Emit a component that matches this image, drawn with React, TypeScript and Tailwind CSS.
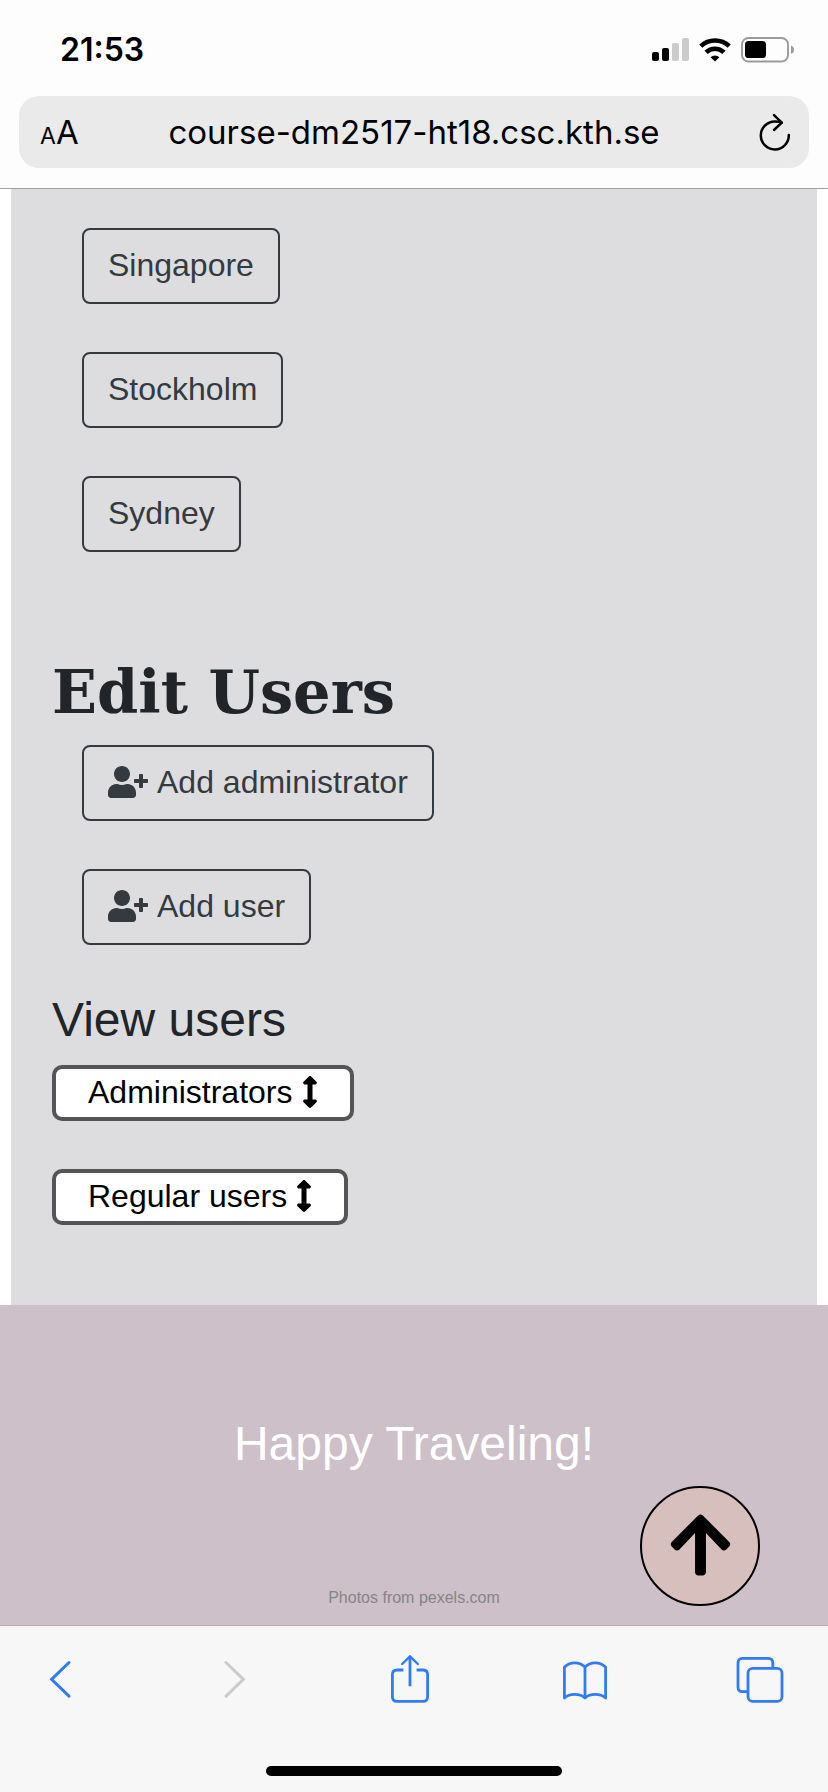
import type { ReactNode } from "react";
import { FaArrowsAltV, FaArrowUp, FaUserPlus } from "react-icons/fa";

const cities = ["Singapore", "Stockholm", "Sydney"];
const userActions = ["Add administrator", "Add user"];
const userLists = ["Administrators", "Regular users"];

function SignalIcon() {
  return (
    <svg width="37" height="24" viewBox="0 0 37 24" aria-hidden="true">
      <rect x="0" y="14" width="7" height="9" rx="2" fill="#000" />
      <rect x="10" y="10" width="7" height="13" rx="2" fill="#000" />
      <rect x="20" y="5" width="7" height="18" rx="2" fill="#cbcbcb" />
      <rect x="30" y="0" width="7" height="23" rx="2" fill="#cbcbcb" />
    </svg>
  );
}

function WifiIcon() {
  return (
    <svg width="32" height="24" viewBox="0 0 32 24" aria-hidden="true">
      <g fill="none" stroke="#000" strokeWidth="4.6">
        <path d="M1.8 8.2 A20.5 20.5 0 0 1 30.2 8.2" />
        <path d="M7.1 14.3 A12.8 12.8 0 0 1 24.9 14.3" />
      </g>
      <path d="M16 23.6 L11.6 19.2 A6.4 6.4 0 0 1 20.4 19.2 Z" fill="#000" />
    </svg>
  );
}

function BatteryIcon() {
  return (
    <svg width="54" height="26" viewBox="0 0 54 26" aria-hidden="true">
      <rect x="1" y="1" width="46" height="23.5" rx="6.5" fill="none" stroke="#9b9b9b" strokeWidth="1.9" />
      <rect x="4" y="4" width="21" height="17" rx="3.6" fill="#000" />
      <path d="M50 8.6 Q53 9.8 53 12.7 Q53 15.6 50 16.8 Z" fill="#9b9b9b" />
    </svg>
  );
}

function ReloadIcon() {
  return (
    <svg width="32" height="38" viewBox="0 0 32 38" fill="none" stroke="#000" strokeWidth="2.5" strokeLinecap="round" strokeLinejoin="round" aria-hidden="true">
      <path d="M29.8 22 A14 14 0 1 1 15.8 8.4 Q19.5 8.4 22.8 9.6" />
      <path d="M15 2.2 L22.8 9.6 L15 17" />
    </svg>
  );
}

function ChevronLeftIcon() {
  return (
    <svg width="24" height="48" viewBox="0 0 24 48" fill="none" stroke="#327bf6" strokeWidth="3" strokeLinecap="round" aria-hidden="true">
      <path d="M21 7.5 L3.6 24.3 L21 41.2" />
    </svg>
  );
}

function ChevronRightIcon() {
  return (
    <svg width="24" height="48" viewBox="0 0 24 48" fill="none" stroke="#cbcbcb" strokeWidth="3" strokeLinecap="round" aria-hidden="true">
      <path d="M3 7.5 L20.4 24.3 L3 41.2" />
    </svg>
  );
}

function ShareIcon() {
  return (
    <svg width="40" height="48" viewBox="0 0 40 48" fill="none" stroke="#327bf6" strokeWidth="2.8" strokeLinecap="round" strokeLinejoin="round" aria-hidden="true">
      <path d="M13.4 15 H7 Q2.4 15 2.4 19.6 V41.8 Q2.4 46.4 7 46.4 H33 Q37.6 46.4 37.6 41.8 V19.6 Q37.6 15 33 15 H26.6" strokeLinecap="butt" />
      <path d="M20 30.2 V2" />
      <path d="M12.2 9 L20 1.4 L27.8 9" strokeWidth="2.4" />
    </svg>
  );
}

function BookIcon() {
  return (
    <svg width="46" height="48" viewBox="0 0 46 48" fill="none" stroke="#327bf6" strokeWidth="2.8" strokeLinecap="round" strokeLinejoin="round" aria-hidden="true">
      <path d="M23 43 V12.2 C18 6.4 7.6 6.4 2.4 12.2 V43 C7.6 38.2 18 38.2 23 43 C28 38.2 38.4 38.2 43.6 43 V12.2 C38.4 6.4 28 6.4 23 12.2" />
    </svg>
  );
}

function TabsIcon() {
  return (
    <svg width="48" height="48" viewBox="0 0 48 48" fill="none" stroke="#327bf6" strokeWidth="2.8" aria-hidden="true">
      <path d="M36.8 13 V8 Q36.8 3.4 32.2 3.4 H6.6 Q2 3.4 2 8 V32 Q2 36.6 6.6 36.6 H12" />
      <rect x="12" y="13.4" width="34" height="33" rx="4.6" />
    </svg>
  );
}

function OutlineButton({ children }: { children: ReactNode }) {
  return (
    <button
      type="button"
      className="ml-[30px] flex items-center gap-[9px] rounded-lg border-2 border-[#343a40] px-6 pt-[11px] pb-[13px] text-[32px] leading-[48px] text-[#343a40]"
    >
      {children}
    </button>
  );
}

function ToolbarButton({ label, disabled, children }: { label: string; disabled?: boolean; children: ReactNode }) {
  return (
    <button type="button" aria-label={label} disabled={disabled} className="flex size-12 items-center justify-center">
      {children}
    </button>
  );
}

export default function App() {
  return (
    <div className="flex min-h-screen flex-col bg-white font-['Liberation_Sans',Arial,sans-serif]">
      <header className="border-b border-[#a1a1a1] bg-[#fdfdfd] px-[19px] pb-5 font-['Inter',sans-serif] text-black">
        <div className="flex h-24 items-center justify-between pr-[14px] pl-[41px]">
          <time className="pt-1 text-[32px] leading-10 font-semibold">21:53</time>
          <div className="flex items-center gap-[10px] pt-1">
            <SignalIcon />
            <WifiIcon />
            <BatteryIcon />
          </div>
        </div>
        <div className="flex h-[72px] items-center rounded-[20px] bg-[#eaeaeb]">
          <button type="button" aria-label="Page settings" className="flex w-20 items-baseline pt-1 pl-[21px]">
            <span className="text-[23px] leading-10">A</span>
            <span className="text-[33px] leading-10">A</span>
          </button>
          <input
            type="text"
            aria-label="Address"
            readOnly
            value="course-dm2517-ht18.csc.kth.se"
            className="min-w-0 flex-1 bg-transparent text-center text-[33px] leading-10 outline-none"
          />
          <button type="button" aria-label="Reload" className="flex w-20 justify-end pr-[18px]">
            <ReloadIcon />
          </button>
        </div>
      </header>

      <main className="mx-[11px] flex grow flex-col bg-[#dddddf] px-[41px] pt-[39px] pb-20">
        <div className="flex flex-col items-start gap-12">
          {cities.map((city) => (
            <OutlineButton key={city}>{city}</OutlineButton>
          ))}
        </div>

        <h1 className="mt-[102px] mb-[14px] font-['DejaVu_Serif',serif] text-[59px] leading-[77px] font-bold text-[#212529]">
          Edit Users
        </h1>
        <div className="flex flex-col items-start gap-12">
          {userActions.map((action) => (
            <OutlineButton key={action}>
              <FaUserPlus className="h-8 w-10" aria-hidden="true" />
              {action}
            </OutlineButton>
          ))}
        </div>

        <h2 className="mt-[46px] mb-4 text-[48px] leading-[58px] text-[#212529]">View users</h2>
        <div className="flex flex-col items-start gap-12">
          {userLists.map((list) => (
            <button
              key={list}
              type="button"
              className="flex items-center gap-[9px] rounded-[10px] border-4 border-[#555555] bg-white px-8 pb-[2px] text-[32px] leading-[46px] text-black"
            >
              {list}
              <FaArrowsAltV className="h-8 w-4" aria-hidden="true" />
            </button>
          ))}
        </div>
      </main>

      <footer className="relative flex flex-col items-center bg-[#cdc0c9] pt-[110px] pb-[15px] text-center">
        <p className="text-[48px] leading-[58px] text-white">Happy Traveling!</p>
        <p className="mt-[113px] text-base leading-6 text-[#858585]">Photos from pexels.com</p>
        <button
          type="button"
          aria-label="Back to top"
          className="absolute right-[68px] bottom-[19px] flex size-[120px] items-center justify-center rounded-full border-2 border-black bg-[#d7bfbe] pb-[2px] text-black"
        >
          <FaArrowUp className="h-[70px] w-[61px]" aria-hidden="true" />
        </button>
      </footer>

      <nav aria-label="Browser" className="border-t border-[#b3abb0] bg-[#f7f7f7] pt-[29px] pb-4">
        <div className="flex items-center justify-between pr-11 pl-9">
          <ToolbarButton label="Back">
            <ChevronLeftIcon />
          </ToolbarButton>
          <ToolbarButton label="Forward" disabled>
            <ChevronRightIcon />
          </ToolbarButton>
          <ToolbarButton label="Share">
            <ShareIcon />
          </ToolbarButton>
          <ToolbarButton label="Bookmarks">
            <BookIcon />
          </ToolbarButton>
          <ToolbarButton label="Tabs">
            <TabsIcon />
          </ToolbarButton>
        </div>
        <div className="mx-auto mt-[63px] h-[10px] w-[296px] rounded-full bg-black" />
      </nav>
    </div>
  );
}
